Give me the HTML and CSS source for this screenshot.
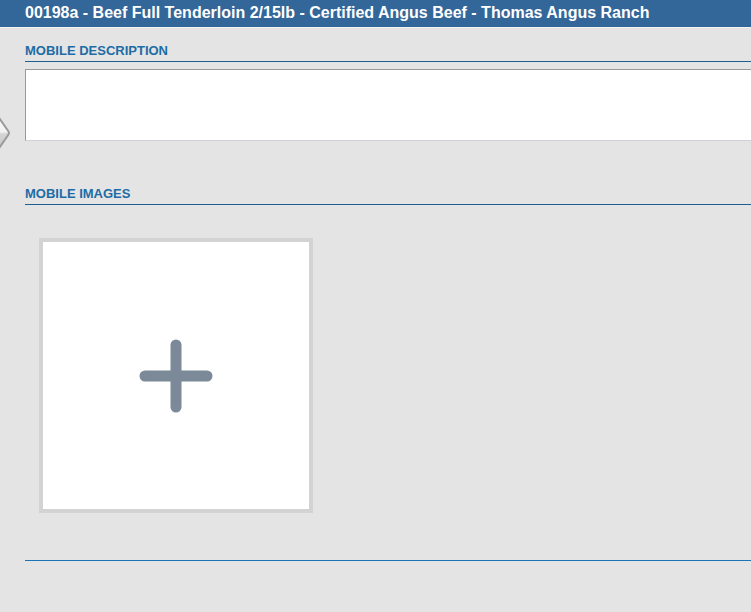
FILE: index.html
```html
<!DOCTYPE html>
<html lang="en">
<head>
  <meta charset="UTF-8" />
  <title>Mobile Item</title>
  <link rel="stylesheet" href="styles.css">
</head>
<body>
  <div class="item-header">00198a - Beef Full Tenderloin 2/15lb - Certified Angus Beef - Thomas Angus Ranch</div>

  <svg class="nav-arrow" width="14" height="46" viewBox="0 0 14 46">
    <defs>
      <linearGradient id="arrowFill" x1="0" y1="0" x2="0" y2="1">
        <stop offset="0" stop-color="#ffffff" />
        <stop offset="0.48" stop-color="#f0f0f0" />
        <stop offset="0.52" stop-color="#d4d4d4" />
        <stop offset="1" stop-color="#c6c6c6" />
      </linearGradient>
    </defs>
    <path d="M-4 3.5 L8.2 21 Q9.6 23 8.2 25 L-4 42.5" fill="url(#arrowFill)" stroke="#9a9a9a" stroke-width="2" stroke-linejoin="round" />
  </svg>

  <div class="content">
    <div class="section-title first">MOBILE DESCRIPTION</div>
    <textarea class="mobile-desc"></textarea>

    <div class="section-title">MOBILE IMAGES</div>
    <div class="image-add">
      <svg width="74" height="74" viewBox="0 0 74 74">
        <path d="M37 6 V68 M6 37 H68" stroke="#7b8998" stroke-width="11" stroke-linecap="round" fill="none" />
      </svg>
    </div>

    <div class="section-end"></div>
  </div>
</body>
</html>
```

FILE: styles.css
```css
body {
  margin: 0;
  background: #e4e4e4;
  font-family: "Liberation Sans", Arial, sans-serif;
  overflow: hidden;
}
.item-header {
  height: 27px;
  line-height: 26px;
  padding-left: 25px;
  background: #336699;
  border-bottom: 1px solid #f2f2f2;
  color: #ffffff;
  font-size: 16px;
  font-weight: 700;
  white-space: nowrap;
}
.nav-arrow {
  position: absolute;
  left: 0;
  top: 110px;
}
.content {
  padding-left: 25px;
}
.section-title {
  margin-top: 45px;
  padding-bottom: 3px;
  line-height: 15px;
  font-size: 13px;
  font-weight: 700;
  color: #1d6ca5;
  border-bottom: 1px solid #1f5f8f;
}
.section-title.first {
  margin-top: 15px;
}
.mobile-desc {
  display: block;
  box-sizing: border-box;
  width: 760px;
  height: 72px;
  margin: 7px 0 0;
  padding: 0;
  border: 1px solid #999999;
  border-right: none;
  border-bottom-color: #d0d0d8;
  background: #ffffff;
  resize: none;
}
.image-add {
  box-sizing: border-box;
  width: 274px;
  height: 275px;
  margin: 33px 0 0 14px;
  border: 4px solid #d3d3d3;
  background: #ffffff;
  display: flex;
  align-items: center;
  justify-content: center;
}
.section-end {
  margin-top: 47px;
  border-top: 1px solid #1a73b5;
}
```
